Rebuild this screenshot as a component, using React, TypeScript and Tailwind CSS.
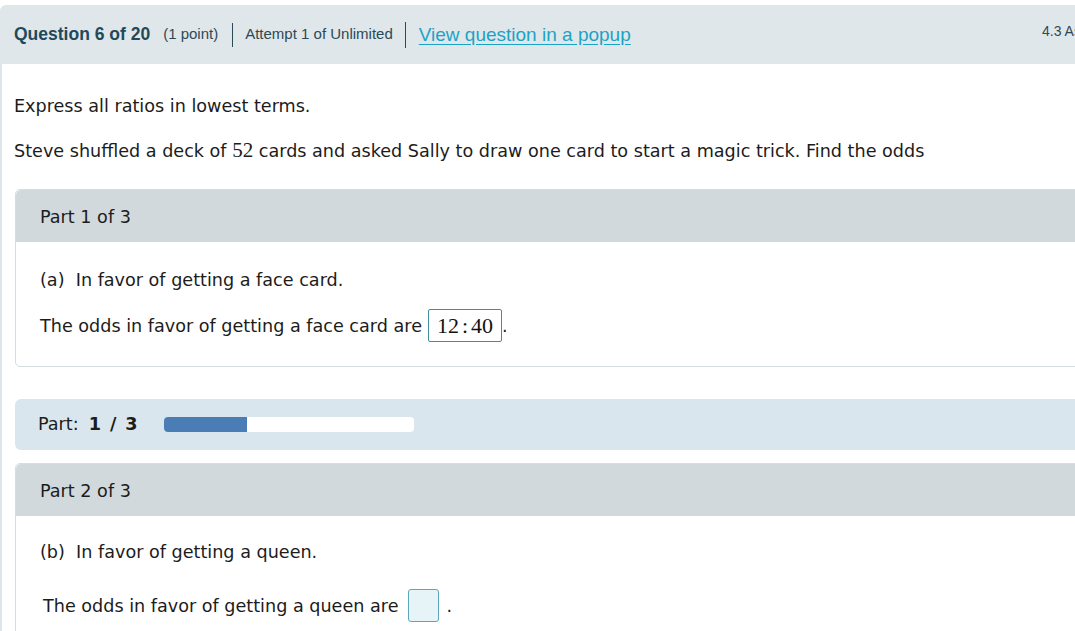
import React from 'react';

const body = "font-['DejaVu_Sans',Verdana,sans-serif] text-[17.6px] text-[#1c1c1c]";
const head = "font-['Liberation_Sans',Arial,sans-serif]";
const serif = "font-['Liberation_Serif','Times_New_Roman',serif]";

const PartHeader = ({ n }: { n: number }) => (
  <div className="h-[52px] bg-[#d1d9dc] flex items-center pl-[24px] pt-[2px] rounded-t-[5px]">
    <span>Part {n} of 3</span>
  </div>
);

const Progress = ({ part, total }: { part: number; total: number }) => (
  <div className="h-[51px] bg-[#dae6ee] rounded-[6px] flex items-center pl-[23px] mt-[32px]">
    <span className="whitespace-nowrap">
      Part:
      <b className="font-bold ml-[10px]">
        {part}
        <span className="mx-[9px]">/</span>
        {total}
      </b>
    </span>
    <div className="ml-[26px] w-[250px] h-[15px] bg-white rounded-[4px] overflow-hidden">
      <div className="h-full bg-[#4a7db6]" style={{ width: `${(part / total) * 100}%` }} />
    </div>
  </div>
);

export default function App() {
  return (
    <div className="w-[1075px] h-[631px] overflow-hidden bg-white pt-[5px]">
      {/* Question header */}
      <div className={`${head} h-[59px] w-[1100px] bg-[#e0e7ea] rounded-tl-[6px] flex items-center pl-[14px] text-[#2c4a56] relative`}>
        <span className="text-[17.5px] font-bold text-[#1f4a5b]">Question 6 of 20</span>
        <span className="text-[15px] ml-[13px]">(1 point)</span>
        <div className="w-px h-[24px] bg-[#2c4a56] ml-[14px]" />
        <span className="text-[15px] ml-[12px]">Attempt 1 of Unlimited</span>
        <div className="w-px h-[26px] bg-[#2c4a56] ml-[12px]" />
        <a className="text-[19px] ml-[13px] text-[#1ba3c6] underline underline-offset-[3px] mt-[2px]">
          View question in a popup
        </a>
        <span className="absolute left-[1042px] top-[16px] text-[14px] text-[#2c4a56] whitespace-nowrap">
          4.3 Assignment
        </span>
      </div>

      {/* Question body */}
      <div className={`${body} border-l-2 border-[#dfe6ea] pl-[12px] w-[1120px] h-full`}>
        <p className="pt-[30px] leading-[24px]">Express all ratios in lowest terms.</p>
        <p className="mt-[20px] leading-[24px]">
          Steve shuffled a deck of <span className={`${serif} text-[21px]`}>52</span> cards and asked Sally to draw
          one card to start a magic trick. Find the odds
        </p>

        <div className="ml-[1px] mt-[26px]">
          {/* Part 1 */}
          <div className="border border-[#d5dde0] rounded-[5px]">
            <PartHeader n={1} />
            <div className="pl-[24px] pt-[26px] pb-[24px]">
              <p className="leading-[24px]">(a)&nbsp;&nbsp;In favor of getting a face card.</p>
              <p className="mt-[17px] flex items-center leading-[24px]">
                <span>The odds in favor of getting a face card are</span>
                <span className={`${serif} ml-[6px] h-[33px] px-[8px] border border-[#3f8d9f] rounded-[2px] flex items-center text-[22px] text-[#111]`}>
                  12<span className="mx-[3px]">:</span>40
                </span>
                <span>.</span>
              </p>
            </div>
          </div>

          <Progress part={1} total={3} />

          {/* Part 2 */}
          <div className="border border-[#d5dde0] rounded-[5px] mt-[13px]">
            <PartHeader n={2} />
            <div className="pl-[24px] pt-[24px] pb-[25px]">
              <p className="leading-[24px]">(b)&nbsp;&nbsp;In favor of getting a queen.</p>
              <p className="mt-[25px] ml-[3px] flex items-center leading-[24px]">
                <span>The odds in favor of getting a queen are</span>
                <span className="ml-[10px] w-[31px] h-[33px] border-[1.5px] border-[#5aa9b9] bg-[#e6f4f8] rounded-[3px]" />
                <span className="ml-[7px]">.</span>
              </p>
            </div>
          </div>
        </div>
      </div>
    </div>
  );
}
